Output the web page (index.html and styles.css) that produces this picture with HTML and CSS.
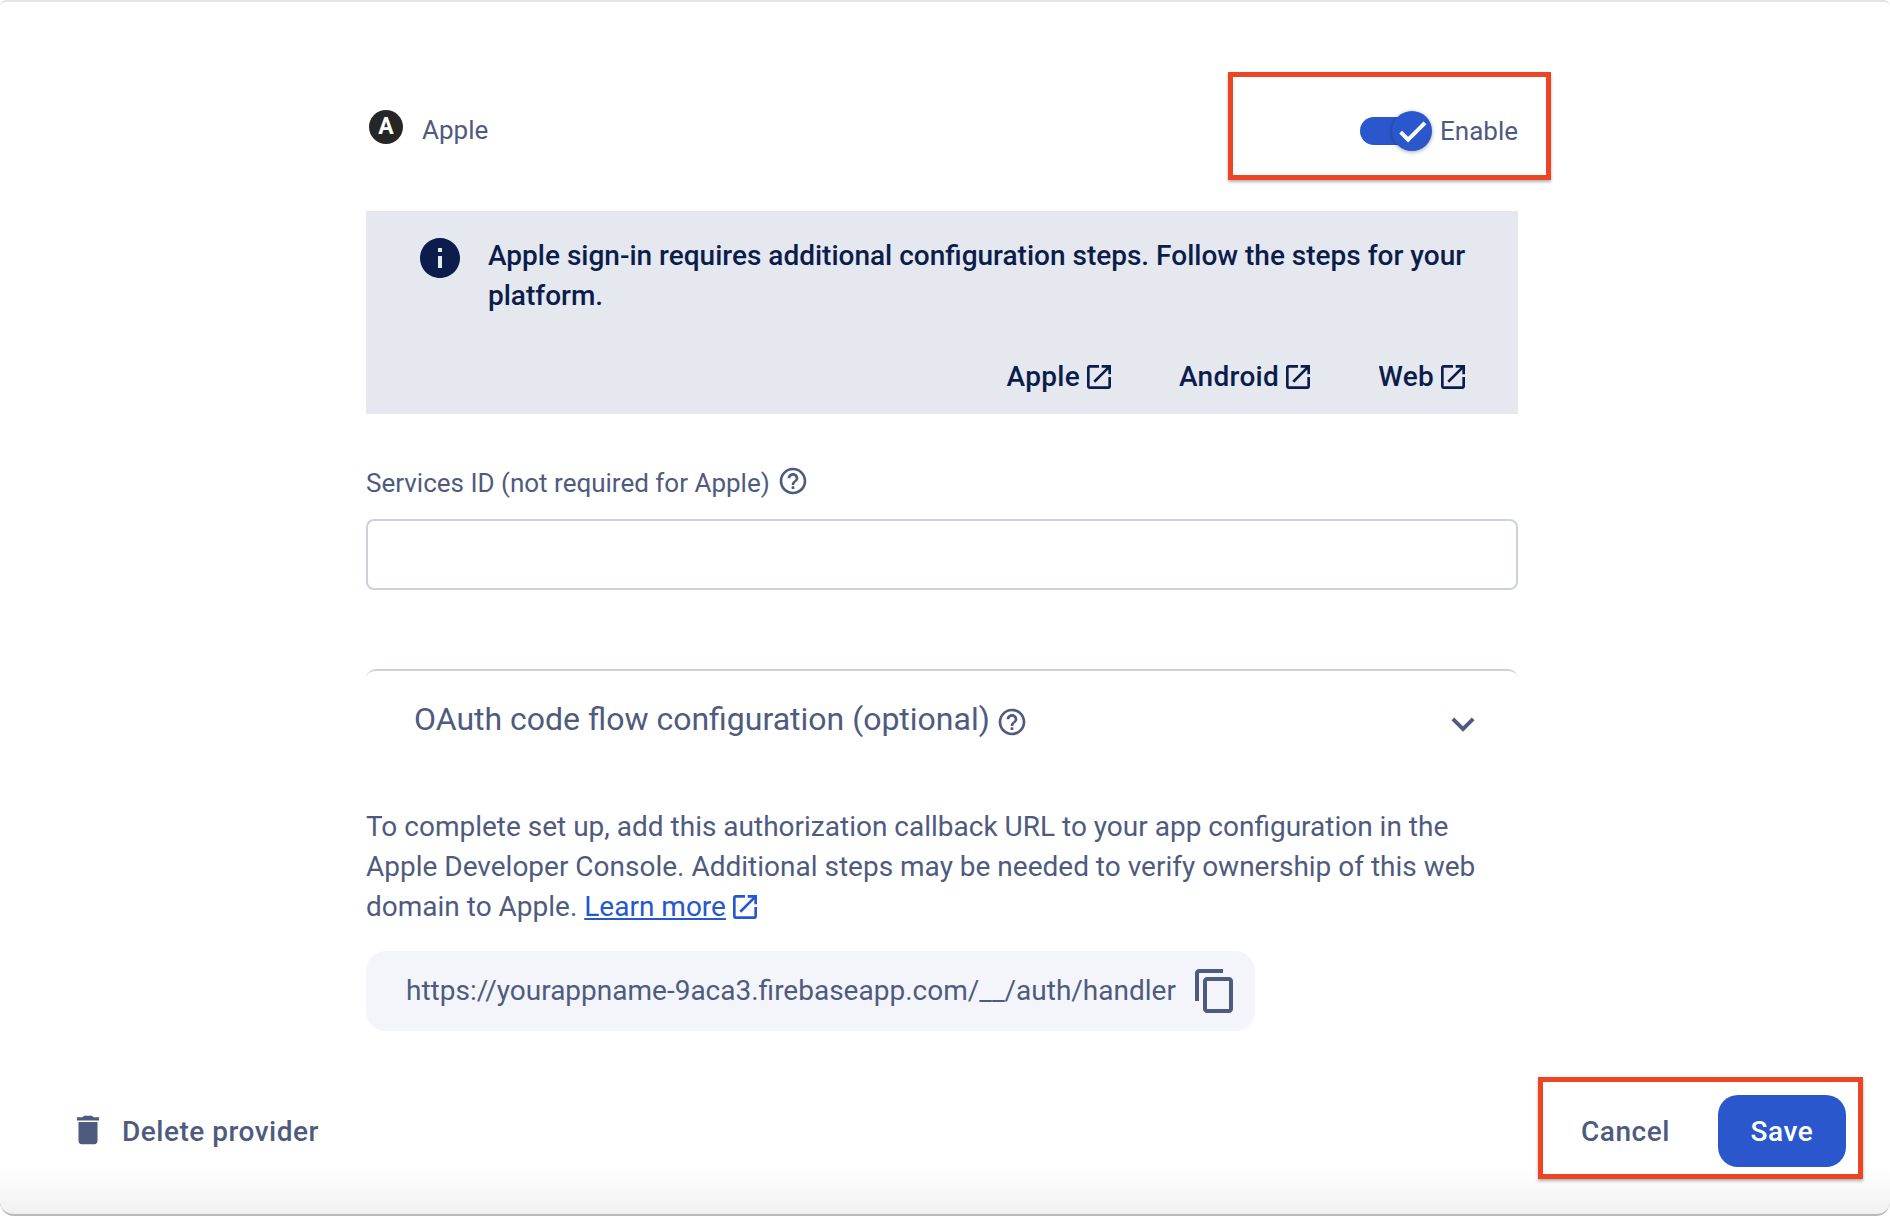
FILE: index.html
```html
<!DOCTYPE html>
<html lang="en">
<head>
<meta charset="utf-8">
<title>Apple provider</title>
<link rel="stylesheet" href="styles.css">
</head>
<body>
<div class="window">
  <main class="main">
    <header class="provider-head">
      <div class="provider-name">
        <span class="provider-logo">A</span>
        <span>Apple</span>
      </div>
      <div class="toggle-wrap">
        <span class="toggle">
          <span class="toggle-knob">
            <svg class="toggle-check" viewBox="0 0 24 24"><path d="M9 16.17L4.83 12l-1.42 1.41L9 19 21 7l-1.41-1.41z"/></svg>
          </span>
        </span>
        <span class="toggle-label">Enable</span>
      </div>
    </header>

    <section class="notice">
      <div class="notice-top">
        <svg class="notice-icon" viewBox="0 0 24 24"><path d="M12 2C6.48 2 2 6.48 2 12s4.48 10 10 10 10-4.48 10-10S17.52 2 12 2zm1 15h-2v-6h2v6zm0-8h-2V7h2v2z"/></svg>
        <p class="notice-text">Apple sign-in requires additional configuration steps. Follow the steps for your platform.</p>
      </div>
      <div class="notice-links">
        <a class="notice-link">Apple<svg class="ext" viewBox="0 0 24 24"><path d="M19 19H5V5h7V3H5c-1.11 0-2 .9-2 2v14c0 1.1.89 2 2 2h14c1.1 0 2-.9 2-2v-7h-2v7zM14 3v2h3.59l-9.83 9.83 1.41 1.41L19 6.41V10h2V3h-7z"/></svg></a>
        <a class="notice-link">Android<svg class="ext" viewBox="0 0 24 24"><path d="M19 19H5V5h7V3H5c-1.11 0-2 .9-2 2v14c0 1.1.89 2 2 2h14c1.1 0 2-.9 2-2v-7h-2v7zM14 3v2h3.59l-9.83 9.83 1.41 1.41L19 6.41V10h2V3h-7z"/></svg></a>
        <a class="notice-link">Web<svg class="ext" viewBox="0 0 24 24"><path d="M19 19H5V5h7V3H5c-1.11 0-2 .9-2 2v14c0 1.1.89 2 2 2h14c1.1 0 2-.9 2-2v-7h-2v7zM14 3v2h3.59l-9.83 9.83 1.41 1.41L19 6.41V10h2V3h-7z"/></svg></a>
      </div>
    </section>

    <label class="field-label">Services ID (not required for Apple)<svg class="help" viewBox="0 0 24 24"><path d="M11 18h2v-2h-2v2zm1-16C6.48 2 2 6.48 2 12s4.48 10 10 10 10-4.48 10-10S17.52 2 12 2zm0 18c-4.41 0-8-3.59-8-8s3.59-8 8-8 8 3.59 8 8-3.59 8-8 8zm0-14c-2.21 0-4 1.79-4 4h2c0-1.1.9-2 2-2s2 .9 2 2c0 2-3 1.75-3 5h2c0-2.25 3-2.5 3-5 0-2.21-1.79-4-4-4z"/></svg></label>
    <input class="field-input" type="text">

    <section class="accordion">
      <div class="accordion-title">
        <span>OAuth code flow configuration (optional)</span>
        <svg class="help help-title" viewBox="0 0 24 24"><path d="M11 18h2v-2h-2v2zm1-16C6.48 2 2 6.48 2 12s4.48 10 10 10 10-4.48 10-10S17.52 2 12 2zm0 18c-4.41 0-8-3.59-8-8s3.59-8 8-8 8 3.59 8 8-3.59 8-8 8zm0-14c-2.21 0-4 1.79-4 4h2c0-1.1.9-2 2-2s2 .9 2 2c0 2-3 1.75-3 5h2c0-2.25 3-2.5 3-5 0-2.21-1.79-4-4-4z"/></svg>
      </div>
      <svg class="chevron" viewBox="0 0 24 24"><path d="M16.59 8.59L12 13.17 7.41 8.59 6 10l6 6 6-6z"/></svg>
    </section>

    <p class="callback-text">To complete set up, add this authorization callback URL to your app configuration in the Apple Developer Console. Additional steps may be needed to verify ownership of this web domain to Apple. <a class="learn-more">Learn more</a><svg class="ext ext-link" viewBox="0 0 24 24"><path d="M19 19H5V5h7V3H5c-1.11 0-2 .9-2 2v14c0 1.1.89 2 2 2h14c1.1 0 2-.9 2-2v-7h-2v7zM14 3v2h3.59l-9.83 9.83 1.41 1.41L19 6.41V10h2V3h-7z"/></svg></p>

    <div class="url-box">
      <span class="url-text">https://yourappname-9aca3.firebaseapp.com/__/auth/handler</span>
      <svg class="copy" viewBox="0 0 24 24"><path d="M16 1H4c-1.1 0-2 .9-2 2v14h2V3h12V1zm3 4H8c-1.1 0-2 .9-2 2v14c0 1.1.9 2 2 2h11c1.1 0 2-.9 2-2V7c0-1.1-.9-2-2-2zm0 16H8V7h11v14z"/></svg>
    </div>
  </main>

  <footer class="footer">
    <button class="delete-btn" type="button">
      <svg class="trash" viewBox="0 0 24 24"><path d="M6 19c0 1.1.9 2 2 2h8c1.1 0 2-.9 2-2V7H6v12zM19 4h-3.5l-1-1h-5l-1 1H5v2h14V4z"/></svg>
      <span>Delete provider</span>
    </button>
    <div class="actions">
      <button class="cancel-btn" type="button">Cancel</button>
      <button class="save-btn" type="button">Save</button>
    </div>
  </footer>

  <div class="callout callout-enable"></div>
  <div class="callout callout-actions"></div>
</div>
</body>
</html>
```
FILE: styles.css
```css
* { box-sizing: border-box; }
html, body { margin: 0; padding: 0; background: #fff; }
body {
  width: 1890px;
  height: 1216px;
  overflow: hidden;
  font-family: Roboto, "Liberation Sans", sans-serif;
  color: #4f5b7e;
}
.window {
  position: relative;
  display: flex;
  flex-direction: column;
  height: 1216px;
  border-top: 2px solid #e4e4e4;
  border-bottom: 2px solid #b9b9b9;
  border-radius: 6px 6px 14px 14px;
  background: linear-gradient(to bottom, #fff 0, #fff 1165px, #f1f1f1 100%);
}
.main {
  width: 1152px;
  margin-left: 366px;
  padding-top: 107px;
}
.provider-head {
  display: flex;
  justify-content: space-between;
  align-items: center;
  height: 42px;
  font-size: 26px;
}
.provider-name { display: flex; align-items: center; gap: 19px; }
.provider-logo {
  display: flex;
  align-items: center;
  justify-content: center;
  width: 34px;
  height: 34px;
  margin: -7px 0 0 3px;
  border-radius: 50%;
  background: #262626;
  color: #fff;
  font-size: 23px;
  font-weight: 700;
}
.toggle-wrap { display: flex; align-items: center; gap: 20px; }
.toggle {
  position: relative;
  display: block;
  width: 60px;
  height: 28px;
  margin-top: 2px;
  border-radius: 14px;
  background: #2a58cc;
}
.toggle-knob {
  position: absolute;
  top: -6px;
  right: -12px;
  display: flex;
  align-items: center;
  justify-content: center;
  width: 40px;
  height: 40px;
  border-radius: 50%;
  background: #2a58cc;
  box-shadow: 0 1px 4px rgba(0, 0, 0, .35);
}
.toggle-check { width: 35px; height: 35px; fill: #fff; stroke: #fff; stroke-width: .7; }
.toggle-label { margin-top: 2px; }

.notice {
  height: 203px;
  margin-top: 60px;
  padding: 25px 49px 0 50px;
  background: #e5e8ee;
  color: #0c1d4b;
  font-size: 28px;
  font-weight: 500;
  line-height: 40px;
}
.notice-top { display: flex; align-items: flex-start; gap: 24px; }
.notice-icon { flex: none; width: 48px; height: 48px; margin-top: -2px; fill: #0c1d4b; }
.notice-text { margin: 0; }
.notice-links { display: flex; justify-content: flex-end; gap: 64px; margin-top: 41px; letter-spacing: .3px; }
.notice-link { display: flex; align-items: center; gap: 3px; }
.ext { width: 32px; height: 32px; fill: currentColor; }

.field-label {
  display: flex;
  align-items: center;
  height: 40px;
  margin-top: 49px;
  font-size: 26px;
}
.help { width: 32px; height: 32px; margin-left: 7px; margin-top: -4px; fill: #4f5b7e; }
.field-input {
  display: block;
  width: 100%;
  height: 71px;
  margin-top: 16px;
  border: 2px solid #cdd1de;
  border-radius: 8px;
  background: #fff;
}
.accordion {
  display: flex;
  justify-content: space-between;
  align-items: center;
  height: 100px;
  margin-top: 79px;
  padding: 0 32px 0 48px;
  border-top: 2px solid #cdd1de;
  border-radius: 10px 10px 0 0;
}
.accordion-title { display: flex; align-items: center; margin-top: -2px; font-size: 32px; }
.help-title { width: 32px; height: 32px; margin-left: 6px; margin-top: 6px; }
.chevron { width: 46px; height: 46px; margin-top: 7px; fill: #4f5b7e; }
.callback-text {
  margin: 38px 0 0;
  font-size: 28px;
  line-height: 40px;
}
.learn-more { color: #2557cf; text-decoration: underline; }
.ext-link { margin-left: 3px; vertical-align: -7px; fill: #2557cf; }
.url-box {
  display: flex;
  align-items: center;
  justify-content: space-between;
  width: 889px;
  height: 80px;
  margin-top: 24px;
  padding: 0 16px 0 40px;
  border-radius: 20px;
  background: #f4f5fb;
  font-size: 28px;
}
.url-text { margin-top: -2px; }
.copy { width: 48px; height: 48px; fill: #4f5b7e; }

.footer {
  display: flex;
  justify-content: space-between;
  align-items: center;
  margin-top: auto;
  padding: 0 44px 47px 69px;
}
button { font-family: inherit; border: 0; background: none; padding: 0; }
.delete-btn {
  display: flex;
  align-items: center;
  gap: 15px;
  color: #4f5b7e;
  font-size: 28px;
  font-weight: 500;
  letter-spacing: .5px;
}
.trash { width: 38px; height: 38px; fill: #4f5b7e; margin-top: -2px; }
.actions { display: flex; align-items: center; gap: 48px; }
.cancel-btn { color: #4f5b7e; font-size: 28px; font-weight: 500; letter-spacing: .56px; }
.save-btn {
  width: 128px;
  height: 72px;
  border-radius: 20px;
  background: #2a58cc;
  color: #fff;
  font-size: 28px;
  font-weight: 500;
  letter-spacing: .56px;
}
.callout {
  position: absolute;
  border: 5px solid #ee4426;
  box-shadow: 0 2px 3px rgba(0, 0, 0, .3);
}
.callout-enable { left: 1228px; top: 70px; width: 323px; height: 108px; }
.callout-actions { left: 1538px; top: 1075px; width: 325px; height: 102px; }
```
